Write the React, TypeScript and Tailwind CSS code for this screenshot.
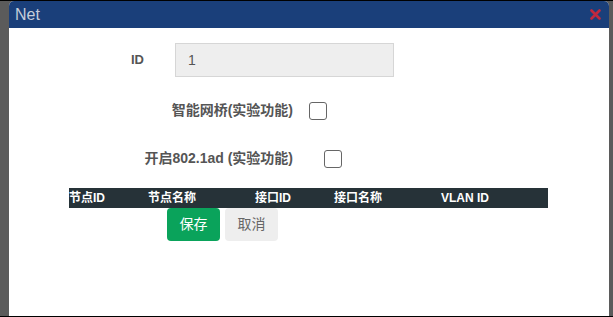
const HEADERS: { label: string; width: string }[] = [
  { label: "节点ID", width: "w-[79px]" },
  { label: "节点名称", width: "w-[107px]" },
  { label: "接口ID", width: "w-[79px]" },
  { label: "接口名称", width: "w-[107px]" },
  { label: "VLAN ID", width: "w-[100px]" },
];

function Checkbox() {
  return <span className="block h-[18px] w-[18px] rounded-[3px] border border-[#666] bg-white" />;
}

export default function App() {
  return (
    <div
      className="h-[317px] w-[613px] overflow-hidden border-y border-black bg-[#5b5b5b] pl-[9px] pr-[4px]"
      style={{ fontFamily: '"Liberation Sans", Arial, "Noto Sans CJK SC", sans-serif' }}
    >
      <div className="flex h-full flex-col overflow-hidden rounded-t-[5px] bg-white">
        <div className="flex h-[27px] flex-none items-center justify-between bg-[#1a3f7a] pl-[6px] pr-[7px]">
          <span className="text-[16px] leading-none text-[#c5cedb]">Net</span>
          <svg width="11" height="11" viewBox="0 0 11 11" className="mr-[1px]">
            <path d="M1.5 1.5 L9.5 9.5 M9.5 1.5 L1.5 9.5" stroke="#c0283e" strokeWidth="2.6" strokeLinecap="round" />
          </svg>
        </div>

        <div className="flex flex-col pt-[15px]">
          <div className="flex items-center">
            <span className="w-[135px] text-right text-[13px] font-bold text-[#555]">ID</span>
            <div className="ml-[31px] flex h-[34px] w-[219px] items-center border border-[#d6d6d6] bg-[#eeeeee] px-[12px] text-[14px] text-[#555]">
              1
            </div>
          </div>

          <div className="mt-[23px] flex items-center">
            <span className="w-[284px] text-right text-[14px] font-bold text-[#555]">智能网桥(实验功能)</span>
            <span className="ml-[16px]">
              <Checkbox />
            </span>
          </div>

          <div className="mt-[27px] flex items-center">
            <span className="w-[284px] text-right text-[14px] font-bold text-[#555]">开启802.1ad (实验功能)</span>
            <span className="ml-[31px]">
              <Checkbox />
            </span>
          </div>

          <div className="ml-[60px] mt-[19px] flex h-[20px] w-[479px] items-center bg-[#263238]">
            {HEADERS.map((h) => (
              <span key={h.label} className={`${h.width} text-[12px] font-bold leading-none text-white`}>
                {h.label}
              </span>
            ))}
          </div>

          <div className="ml-[158px] flex gap-[5px]">
            <button className="h-[33px] w-[53px] rounded-[4px] bg-[#0aa35b] text-[14px] text-white">保存</button>
            <button className="h-[33px] w-[53px] rounded-[4px] bg-[#eeeeee] text-[14px] text-[#666]">取消</button>
          </div>
        </div>
      </div>
    </div>
  );
}
